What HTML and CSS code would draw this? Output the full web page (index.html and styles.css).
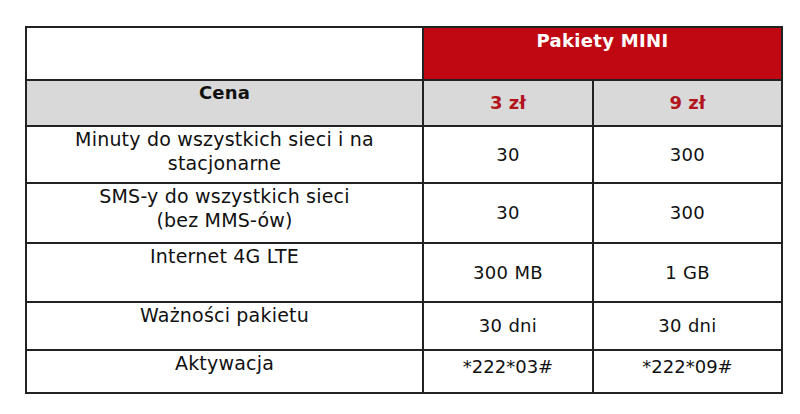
FILE: index.html
```html
<!DOCTYPE html>
<html lang="pl">
<head>
<meta charset="utf-8">
<link rel="stylesheet" href="styles.css">
</head>
<body>
<div class="page">
<table class="plans">
  <colgroup><col class="c1"><col class="c2"><col class="c3"></colgroup>
  <tr class="r-head">
    <td class="blank"></td>
    <td class="brand" colspan="2">Pakiety MINI</td>
  </tr>
  <tr class="r-price">
    <td class="label bold">Cena</td>
    <td class="price">3 zł</td>
    <td class="price">9 zł</td>
  </tr>
  <tr class="r3">
    <td class="label">Minuty do wszystkich sieci i na<br>stacjonarne</td>
    <td class="val">30</td>
    <td class="val">300</td>
  </tr>
  <tr class="r4">
    <td class="label">SMS-y do wszystkich sieci<br>(bez MMS-ów)</td>
    <td class="val">30</td>
    <td class="val">300</td>
  </tr>
  <tr class="r5">
    <td class="label">Internet 4G LTE</td>
    <td class="val">300 MB</td>
    <td class="val">1 GB</td>
  </tr>
  <tr class="r6">
    <td class="label">Ważności pakietu</td>
    <td class="val">30 dni</td>
    <td class="val">30 dni</td>
  </tr>
  <tr class="r7">
    <td class="label">Aktywacja</td>
    <td class="val act">*222*03#</td>
    <td class="val act">*222*09#</td>
  </tr>
</table>
</div>
</body>
</html>
```
FILE: styles.css
```css
html, body {
  margin: 0;
  padding: 0;
  background: #ffffff;
}
.page {
  padding: 26px 0 0 25px;
}
.plans {
  border-collapse: collapse;
  table-layout: fixed;
  width: 756px;
  font-family: "DejaVu Sans", Verdana, sans-serif;
  font-size: 18px;
  color: #111;
  border: 2px solid #333;
}
.c1 { width: 397px; }
.c2 { width: 170px; }
.c3 { width: 189px; }
.plans td {
  border: 2px solid #222;
  text-align: center;
  padding: 0;
  line-height: 24px;
}
.r-head { height: 53px; }
.r-price { height: 46px; }
.r3 { height: 57px; }
.r4 { height: 60px; }
.r5 { height: 59px; }
.r6 { height: 48px; }
.r7 { height: 43px; }
.blank { background: #fff; }
.brand {
  background: #c00812;
  color: #fff;
  font-weight: bold;
  vertical-align: top;
  padding-top: 1px !important;
  letter-spacing: 0.3px;
}
.r-price td { background: #d9d9d9; }
.label {
  vertical-align: top;
  padding-top: 0 !important;
  font-size: 19px;
  letter-spacing: 0.2px;
}
.bold { font-weight: bold; font-size: 18px; padding-top: 0 !important; }
.price {
  color: #b3141c;
  font-weight: bold;
  vertical-align: top;
  padding-top: 10px !important;
}
.val { vertical-align: middle; letter-spacing: 0.3px; }
.act { vertical-align: top; padding-top: 4px !important; letter-spacing: 0; }
```
